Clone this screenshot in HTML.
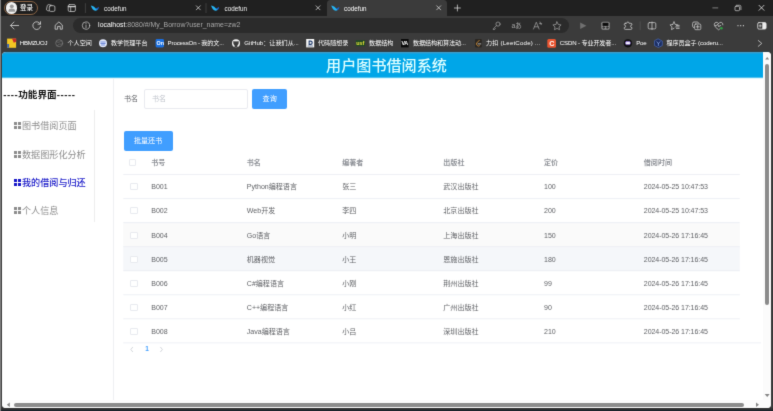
<!DOCTYPE html>
<html lang="zh-CN">
<head>
<meta charset="utf-8">
<title>codefun</title>
<style>
html,body{margin:0;padding:0;}
body{width:773px;height:411px;overflow:hidden;position:relative;background:#3b3b3b;
  font-family:"Liberation Sans","Noto Sans CJK SC",sans-serif;color:#fff;}
.abs{position:absolute;}
.t{position:absolute;white-space:nowrap;line-height:1;}
svg{position:absolute;overflow:visible;}

/* ---------- browser chrome ---------- */
#tabstrip{left:0;top:0;width:773px;height:16px;background:#202020;}
#activetab{left:326.5px;top:0.4px;width:120px;height:16px;background:#3b3b3b;border-radius:3.5px 3.5px 0 0;}
#toolbar{left:0;top:15.7px;width:773px;height:21px;background:#3b3b3b;}
#bookbar{left:0;top:36px;width:773px;height:16px;background:#3b3b3b;}
#addr{left:73px;top:18.1px;width:495.5px;height:14.8px;background:#2b2b2b;border-radius:8px;}
#leftedge{left:0;top:0;width:0.8px;height:411px;background:#808080;}
#bottomedge{left:1px;top:408px;width:772px;height:3px;background:linear-gradient(#333 0,#2e2e30 1.6px,#1c262c 1.6px);}
.tabtxt{font-size:6.3px;color:#f4f4f4;top:5.5px;}
.bm{font-size:6.1px;color:#fff;top:40.2px;}
#pill{left:3.5px;top:0.8px;width:34.5px;height:14.5px;border:0.8px solid #8a6445;border-radius:8px;box-sizing:border-box;background:#1f1f1f;}

/* ---------- page ---------- */
#page{left:2px;top:52px;width:769px;height:356px;background:#fff;border-radius:4px 4px 4px 4px;overflow:hidden;}
#hdr{left:0;top:0;width:761px;height:26px;background:linear-gradient(#3c9fcd 0,#3c9fcd 1px,#19a0dc 1px,#19a0dc 2px,#00a6e8 2px,#00a6e8 25px,#4fc0ee 25px);}
#in{left:0;top:0;width:769px;height:356px;}
#preedge{left:4px;top:51px;width:765px;height:1px;background:#2d4049;}
#title{font-size:15.1px;font-weight:500;color:#e0ffff;top:6.3px;left:0;width:769px;text-align:center;}
.side{font-size:9.1px;color:#8c8c8c;left:12px;}
.sq{display:inline-block;width:7px;height:7px;margin-right:1px;vertical-align:-0.3px;
  background:
   linear-gradient(currentColor,currentColor) 0 0/3px 3px no-repeat,
   linear-gradient(currentColor,currentColor) 4px 0/3px 3px no-repeat,
   linear-gradient(currentColor,currentColor) 0 4px/3px 3px no-repeat,
   linear-gradient(currentColor,currentColor) 4px 4px/3px 3px no-repeat;}
.btn{background:#409eff;border-radius:2px;color:#fff;font-size:7.05px;text-align:center;}
.th{font-size:7.05px;font-weight:bold;color:#909399;top:107px;}
.td{font-size:7.05px;color:#606266;}
.cb{left:128.300px;width:7.400px;height:7.400px;border:0.6px solid #e8eaef;border-radius:1px;box-sizing:border-box;background:#fff;}
.td.c6{letter-spacing:-0.07px}
.c1{left:149.2px}.c2{left:244.8px}.c3{left:340.2px}.c4{left:441.3px}.c5{left:542px}.c6{left:641.8px}
</style>
</head>
<body>
<svg width="0" height="0" style="position:absolute;left:0;top:0"><filter id="soft" x="0" y="0" width="1" height="1" color-interpolation-filters="sRGB"><feConvolveMatrix order="3" kernelMatrix="0.0121 0.0858 0.0121 0.0858 0.6084 0.0858 0.0121 0.0858 0.0121" divisor="1" edgeMode="duplicate" preserveAlpha="true"/></filter></svg>
<div class="abs" id="root" style="left:0;top:0;width:773px;height:411px;will-change:transform;background:#3b3b3b;filter:url(#soft);">
<!-- ======= tab strip ======= -->
<div class="abs" id="tabstrip"></div>
<div class="abs" id="activetab"></div>
<div class="abs" id="toolbar"></div>
<div class="abs" id="bookbar"></div>
<div class="abs" id="addr"></div>
<div class="abs" id="leftedge"></div>
<div class="abs" id="bottomedge"></div>
<div class="abs" id="preedge"></div>

<div class="abs" id="pill"></div>
<div class="abs" style="left:5.8px;top:2.2px;width:11.6px;height:11.6px;border-radius:50%;background:#f2f2f2;"></div>
<svg style="left:5.8px;top:2.2px" width="11.6" height="11.6" viewBox="0 0 24 24"><circle cx="12" cy="9" r="4" fill="#9a9a9a"/><path d="M5 19c0-4 3-5.5 7-5.5s7 1.500 7 5.500v1h-14z" fill="#9a9a9a"/></svg>
<div class="t" style="left:20px;top:4.6px;font-size:6.5px;font-weight:500;color:#fff;">登录</div>

<div class="t tabtxt" style="left:104px;">codefun</div>
<div class="t tabtxt" style="left:224.500px;">codefun</div>
<div class="t tabtxt" style="left:344px;color:#fff;">codefun</div>

<!-- ======= address ======= -->
<div class="t" style="left:98.100px;top:22.400px;font-size:6.930px;color:#fff;">localhost<span style="color:#a8a8a8">:8080/#/My_Borrow?user_name=zw2</span></div>

<!-- ======= bookmarks ======= -->
<div class="t bm" style="left:19.8px;letter-spacing:-0.3px">HBMZUOJ</div>
<div class="t bm" style="left:67.5px;">个人空间</div>
<div class="t bm" style="left:111px;">教学管理平台</div>
<div class="t bm" style="left:167.6px;letter-spacing:-0.15px">ProcessOn - 我的文...</div>
<div class="t bm" style="left:244.3px;">GitHub：让我们从...</div>
<div class="t bm" style="left:318px;">代码随想录</div>
<div class="t bm" style="left:369px;">数据结构</div>
<div class="t bm" style="left:413px;letter-spacing:-0.1px">数据结构和算法动...</div>
<div class="t bm" style="left:486px;letter-spacing:0.2px">力扣 (LeetCode) ...</div>
<div class="t bm" style="left:559.7px;letter-spacing:-0.13px">CSDN - 专业开发者...</div>
<div class="t bm" style="left:636.3px;letter-spacing:-0.3px">Poe</div>
<div class="t bm" style="left:666.5px;letter-spacing:-0.1px">程序员盒子 (coderu...</div>

<!-- ======= chrome icons ======= -->
<svg id="ico" style="left:0;top:0" width="773" height="52" viewBox="0 0 773 52" fill="none" stroke-linecap="round" stroke-linejoin="round">
  <!-- workspaces -->
  <g stroke="#cfcfcf" stroke-width="0.75">
    <path d="M48.800 10.900 L47.300 10.500 Q46.300 10.200 46.500 9.200 L47.300 5.600 Q47.600 4.500 48.700 4.700 L52 5.400"/>
    <rect x="49.300" y="5.700" width="5.600" height="5.700" rx="1.300" fill="#202020"/>
    <!-- tab actions -->
    <rect x="68.200" y="4.600" width="7.200" height="6.900" rx="1.400"/>
    <path d="M68.400 6.600 H75.200" stroke-width="1.300"/>
    <path d="M70.700 6.800 V11.300"/>
  </g>
  <path d="M85.400 3.600 V12.600 M206 3.600 V12.600" stroke="#555" stroke-width="0.6"/>
  <!-- favicons (bird) -->
    <g stroke="none">
    <path d="M90.800 5.400 C93.300 5.800 95.200 7.300 96.200 9 C97 9 97.600 8.600 98 8.200 C98 9.800 96.800 10.800 95.400 10.700 C93.300 10.400 91.800 8.400 90.800 5.400Z" fill="#25b3f2"/>
    <path d="M95.600 8.100 C96.800 8.200 98 7.600 98.900 6.800 C99 8.600 98 9.900 96.600 10.300 C96.900 9.400 96.400 8.600 95.600 8.100Z" fill="#1b62c4"/>
  </g>
  <g stroke="none" transform="translate(120.2 0)">
    <path d="M90.800 5.400 C93.300 5.800 95.200 7.300 96.200 9 C97 9 97.600 8.600 98 8.200 C98 9.800 96.800 10.800 95.400 10.700 C93.300 10.400 91.800 8.400 90.800 5.400Z" fill="#25b3f2"/>
    <path d="M95.600 8.100 C96.800 8.200 98 7.600 98.900 6.800 C99 8.600 98 9.900 96.600 10.300 C96.900 9.400 96.400 8.600 95.600 8.100Z" fill="#1b62c4"/>
  </g>
  <g stroke="none" transform="translate(240.4 0)">
    <path d="M90.800 5.400 C93.300 5.800 95.200 7.300 96.200 9 C97 9 97.600 8.600 98 8.200 C98 9.800 96.800 10.800 95.400 10.700 C93.300 10.400 91.800 8.400 90.800 5.400Z" fill="#25b3f2"/>
    <path d="M95.600 8.100 C96.800 8.200 98 7.600 98.900 6.800 C99 8.600 98 9.900 96.600 10.300 C96.900 9.400 96.400 8.600 95.600 8.100Z" fill="#1b62c4"/>
  </g>
  <!-- tab close buttons / plus -->
  <g stroke="#e8e8e8" stroke-width="0.7">
    <path d="M196.300 5.800 l4 4 m0 -4 l-4 4"/>
    <path d="M316 5.800 l4 4 m0 -4 l-4 4"/>
    <path d="M436.700 5.800 l4 4 m0 -4 l-4 4"/>
    <path d="M454.400 8 h6 m-3 -3 v6"/>
  </g>
  <!-- window controls -->
  <path d="M712.800 7.900 h5" stroke="#a9a9a9" stroke-width="0.7"/>
  <g stroke="#d5d5d5" stroke-width="0.7">
    <rect x="735" y="6.300" width="4.500" height="4.400" rx="0.900"/>
    <path d="M736.400 5.300 h3.200 q1.300 0 1.300 1.300 v3.100"/>
  </g>
  <path d="M759 5.300 l5 5 m0 -5 l-5 5" stroke="#f2f2f2" stroke-width="0.75"/>

  <!-- nav -->
  <g stroke="#d8d8d8" stroke-width="0.8">
    <path d="M18.600 25.500 H10.600 M14 22 L10.500 25.500 L14 29"/>
    <path d="M40.300 24 A3.900 3.900 0 1 0 40.600 26.300 M40.500 21.700 V24.200 H38"/>
    <path d="M55.500 25 L58.900 21.900 L62.300 25 V29.200 H60.200 V26.400 H57.600 V29.200 H55.500Z"/>
  </g>
  <!-- info -->
  <g stroke="#d0d0d0" stroke-width="0.7">
    <circle cx="86" cy="25.600" r="3.700"/>
    <path d="M86 25 V27.700 M86 23.500 V23.600"/>
  </g>
  <!-- address bar icons -->
  <g stroke="#a6a6a6" stroke-width="0.7">
    <circle cx="498" cy="24.100" r="2.100"/><path d="M496.500 25.600 L493.200 28.900 V29.500 H494.600 L495.300 28.400"/>
    <path d="M533.500 29 L536.300 22.200 L539.100 29 M534.500 26.800 H538.100 M540 22 l1.200 2.600 m-1.700 -1 h2.200"/>
    <path d="M557 21.900 L558.300 24.500 L561.100 24.900 L559 26.900 L559.500 29.700 L557 28.400 L554.500 29.700 L555 26.900 L552.900 24.900 L555.700 24.500Z"/>
  </g>
  <!-- play -->
  <path d="M580.200 22.500 L586.400 25.800 L580.200 29.100Z" fill="#707070" stroke="none"/>
  <!-- tampermonkey-like -->
  <rect x="601.300" y="21.700" width="8.400" height="8" rx="1.600" fill="#8e8e8e" stroke="none"/>
  <path d="M602.500 22.700 h6 v3.200 h-6z" fill="#0c0c0c" stroke="none"/>
  <circle cx="603.700" cy="27.600" r="1" fill="#3b3b3b" stroke="#1a1a1a" stroke-width="0.300"/><circle cx="607.300" cy="27.600" r="1" fill="#3b3b3b" stroke="#1a1a1a" stroke-width="0.300"/>
  <!-- puzzle -->
  <path d="M625.300 23.300 h1.300 a1.250 1.250 0 0 1 2.500 0 h1.800 q1 0 1 1 v0.700 a1.300 1.300 0 0 0 0 2.600 v0.800 q0 1 -1 1 h-5.600 q-1 0 -1 -1 v-0.800 a1.300 1.300 0 0 0 0 -2.600 v-0.700 q0 -1 1 -1z" stroke="#d0d0d0" stroke-width="0.75"/>
  <path d="M640.200 21.800 V29.700" stroke="#5c5c5c" stroke-width="0.6"/>
  <!-- split screen -->
  <g stroke="#d0d0d0" stroke-width="0.75">
    <rect x="648.200" y="22.600" width="7.600" height="6.300" rx="1.200"/><path d="M652 22 V29.500"/>
    <!-- favourites -->
    <path d="M674 21.900 L675.200 24.500 L677.800 24.900 M672.700 24.500 L674 21.900 M672.700 24.500 L670 24.900 L672 26.900 L671.500 29.600 L674 28.300 M676.400 25.400 H679.200 M675.600 26.900 H679.200 M676.400 28.400 H679.200"/>
    <!-- collections -->
    <rect x="694.600" y="24" width="6.200" height="5.700" rx="1.200"/><path d="M693.800 27.600 q-1.200 -0.200 -1.200 -1.400 v-2.800 q0 -1.400 1.400 -1.400 h3.200 q1.200 0 1.400 1 M697.700 25.300 v3 m-1.500 -1.500 h3"/>
    <!-- heart -->
    <path d="M718.600 23.600 q-1 -1.600 -2.600 -1.300 q-1.800 0.500 -1.700 2.500 q0.200 2.200 4.300 5 q1 -0.700 1.700 -1.300 M718.600 23.600 q1 -1.600 2.600 -1.300 q1.800 0.500 1.700 2.500 M715.200 25.600 h1.500 l0.900 -1.500 l1.300 2.800 l0.800 -1.300 h1"/>
  </g>
  <circle cx="721.400" cy="28.300" r="1.300" fill="#2fa043" stroke="none"/>
  <g fill="#dcdcdc" stroke="none"><circle cx="738" cy="25.700" r="0.600"/><circle cx="740.700" cy="25.700" r="0.600"/><circle cx="743.400" cy="25.700" r="0.600"/></g>
  <!-- sidebar btn -->
  <rect x="757.700" y="22.600" width="8.400" height="6.500" rx="1.300" stroke="#ececec" stroke-width="0.75"/>
  <path d="M762.300 22.600 h2.500 q1.300 0 1.300 1.300 v3.900 q0 1.300 -1.300 1.300 h-2.500z" fill="#ececec" stroke="none"/>
  <path d="M759 25.850 h2.400 m-1.200 -1.200 v2.400" stroke="#ececec" stroke-width="0.6"/>
  <!-- bookmark overflow chevron -->
  <path d="M758.300 40.500 L761.800 43.400 L758.300 46.300" stroke="#d8d8d8" stroke-width="0.75"/>

  <!-- bookmark favicons -->
  <g stroke="none">
    <rect x="7.100" y="38.600" width="9" height="9.200" fill="#f3c623"/>
    <path d="M12 38.600 h4.100 v3.200 l-2.300 0.900z" fill="#c62a2a"/>
    <path d="M7.100 44 h2 v3.800 h-2z" fill="#3b63b8"/>
    <circle cx="59.200" cy="43.200" r="3.500" fill="none" stroke="#7b7b7b" stroke-width="0.700"/>
    <path d="M56.300 41.600 q2 1.500 3.300 0.300 q1 -1.500 2.400 -1 M57 45.800 q1.500 -2.500 5.500 -1.800" fill="none" stroke="#7b7b7b" stroke-width="0.600"/>
    <circle cx="103" cy="43.200" r="4" fill="#e4eafc"/>
    <path d="M100.800 42 h4.400 M100.800 43.500 h4.400 M101.500 45 h3" stroke="#3f62c9" stroke-width="0.700" fill="none"/>
    <rect x="155.600" y="39" width="8.400" height="8.400" rx="1.400" fill="#1a6fe0"/>
    <circle cx="236" cy="43.200" r="4" fill="#f4f4f4"/>
    <path d="M234.600 47 v-1.600 q-1.700 -1.200 -1.300 -2.900 q-0.200 -1 0.300 -1.600 q0.800 0 1.300 0.500 q1.100 -0.300 2.200 0 q0.500 -0.500 1.300 -0.500 q0.500 0.600 0.300 1.600 q0.400 1.700 -1.300 2.900 v1.600z" fill="#3b3b3b"/>
    <rect x="306.200" y="39" width="8" height="8.400" fill="#f8f8f8"/>
    <path d="M308.600 40.500 h2 q2.200 0 2.200 2.200 q0 2.200 -2.200 2.200 h-2z M309.700 41.700 v2 h1 q0.900 0 0.900 -1 q0 -1 -0.900 -1z" fill="#1f3a6b" fill-rule="evenodd"/>
    <path d="M308 46 h4.600" stroke="#1f3a6b" stroke-width="0.600"/>
    <rect x="355.900" y="40.300" width="9.100" height="5.900" fill="#1f4a23"/>
    <rect x="401" y="39" width="7.600" height="8.400" fill="#0a0a0a"/>
    <rect x="475" y="39" width="6.800" height="8.400" rx="1" fill="#2a2622"/>
    <path d="M479.300 40.300 L476.700 43 q-0.700 0.900 0 1.800 l1 1 q0.900 0.700 1.800 0" fill="none" stroke="#f0a23a" stroke-width="0.700"/>
    <path d="M478 43.900 h2.800" stroke="#e8e8e8" stroke-width="0.700"/>
    <rect x="547.300" y="39.100" width="8.700" height="8.700" rx="1.500" fill="#ea5430"/>
    <circle cx="627.900" cy="43.300" r="4.100" fill="#0e0e10"/>
    <rect x="625.500" y="41.600" width="4.800" height="3" rx="1" fill="#f4f0ff" stroke="#8a63e8" stroke-width="0.500"/>
    <path d="M658.400 39 L662.300 41.100 V45.500 L658.400 47.600 L654.500 45.500 V41.100Z" fill="#1c2e63" stroke="#4f7be0" stroke-width="0.500"/>
    <path d="M656.900 41.800 L658.400 43.700 L659.900 41.800 M658.400 43.700 V45.600" fill="none" stroke="#9fc0ff" stroke-width="0.600"/>
  </g>
  <g font-family='"Liberation Sans",sans-serif' font-weight="bold" stroke="none">
    <text x="156.500" y="45.400" font-size="5.400" fill="#fff">On</text>
    <text x="356.300" y="45.100" font-size="5.400" fill="#e9e03a">usf</text>
    <text x="401.400" y="45.300" font-size="5.400" fill="#fff" letter-spacing="-0.4">VA</text>
    <text x="549.200" y="46" font-size="7.200" fill="#fff">C</text>
    <text x="511.600" y="28.200" font-size="6.800" fill="#a6a6a6" font-weight="normal" font-family='"Liberation Sans","Noto Sans CJK JP",sans-serif' letter-spacing="-0.3">aあ</text>
  </g>
</svg>

<!-- ======= page ======= -->
<div class="abs" id="page"><div class="abs" id="in">
  <div class="abs" id="hdr"></div>
  <div class="t" id="title">用户图书借阅系统</div>
  <div class="abs" style="left:0;top:26px;width:761px;height:1px;background:#def9fd;"></div>

  <!-- sidebar -->
  <div class="t" style="left:1.300px;top:37.600px;font-size:9.600px;font-weight:bold;color:#111;"><span style="letter-spacing:0.55px">----</span>功能界面<span style="letter-spacing:0.55px">-----</span></div>
  <div class="abs" style="left:92px;top:58px;width:0.6px;height:112px;background:#ededed;"></div>
  <div class="t side" style="top:70.200px;"><span class="sq"></span>图书借阅页面</div>
  <div class="t side" style="top:98.500px;"><span class="sq"></span>数据图形化分析</div>
  <div class="t side" style="top:126.800px;color:#1616c8;font-weight:500;"><span class="sq"></span>我的借阅与归还</div>
  <div class="t side" style="top:155.100px;"><span class="sq"></span>个人信息</div>
  <div class="abs" style="left:111px;top:26px;width:0.6px;height:322px;background:#eeeff2;"></div>

  <!-- search -->
  <div class="t" style="left:122px;top:42.700px;font-size:7.05px;color:#606266;">书名</div>
  <div class="abs" style="left:141.500px;top:36.500px;width:104px;height:20px;border:0.6px solid #e9ebf0;border-radius:2px;box-sizing:border-box;background:#fff;"></div>
  <div class="t" style="left:150px;top:42.700px;font-size:7.05px;color:#c0c4cc;">书名</div>
  <div class="abs btn" style="left:250px;top:36.700px;width:35.300px;height:19.900px;line-height:19.900px;">查询</div>
  <div class="abs btn" style="left:121.500px;top:78.700px;width:49.200px;height:19.900px;line-height:19.900px;">批量还书</div>

  <!-- table -->
  <svg style="left:0;top:0" width="769" height="356" viewBox="0 0 769 356" shape-rendering="geometricPrecision">
    <rect x="121.300" y="170.60" width="616.500" height="24.05" fill="#fafafa"/>
    <rect x="121.300" y="194.65" width="616.500" height="24.05" fill="#f5f7fa"/>
    <path d="M121.300 122.50 H737.800 M121.300 146.55 H737.800 M121.300 170.60 H737.800 M121.300 194.65 H737.800 M121.300 218.70 H737.800 M121.300 242.75 H737.800 M121.300 266.80 H737.800 M121.300 290.85 H759" stroke="#e6e9f1" stroke-width="0.700" fill="none"/>
  </svg>

  <div class="abs cb" style="top:107px;left:127px;"></div>
  <div class="t th c1">书号</div><div class="t th c2">书名</div><div class="t th c3">编著者</div><div class="t th c4">出版社</div><div class="t th c5">定价</div><div class="t th c6">借阅时间</div>

  <div class="abs cb" style="top:131.10px;"></div>
  <div class="t td c1" style="top:131px">B001</div><div class="t td c2" style="top:131px">Python编程语言</div><div class="t td c3" style="top:131px">张三</div><div class="t td c4" style="top:131px">武汉出版社</div><div class="t td c5" style="top:131px">100</div><div class="t td c6" style="top:131px">2024-05-25 10:47:53</div>

  <div class="abs cb" style="top:155.10px;"></div>
  <div class="t td c1" style="top:155px">B002</div><div class="t td c2" style="top:155px">Web开发</div><div class="t td c3" style="top:155px">李四</div><div class="t td c4" style="top:155px">北京出版社</div><div class="t td c5" style="top:155px">200</div><div class="t td c6" style="top:155px">2024-05-25 10:47:53</div>

  <div class="abs cb" style="top:180.10px;"></div>
  <div class="t td c1" style="top:180px">B004</div><div class="t td c2" style="top:180px">Go语言</div><div class="t td c3" style="top:180px">小明</div><div class="t td c4" style="top:180px">上海出版社</div><div class="t td c5" style="top:180px">150</div><div class="t td c6" style="top:180px">2024-05-26 17:16:45</div>

  <div class="abs cb" style="top:204.10px;"></div>
  <div class="t td c1" style="top:204px">B005</div><div class="t td c2" style="top:204px">机器视觉</div><div class="t td c3" style="top:204px">小王</div><div class="t td c4" style="top:204px">恩施出版社</div><div class="t td c5" style="top:204px">180</div><div class="t td c6" style="top:204px">2024-05-26 17:16:45</div>

  <div class="abs cb" style="top:228.10px;"></div>
  <div class="t td c1" style="top:228px">B006</div><div class="t td c2" style="top:228px">C#编程语言</div><div class="t td c3" style="top:228px">小刚</div><div class="t td c4" style="top:228px">荆州出版社</div><div class="t td c5" style="top:228px">99</div><div class="t td c6" style="top:228px">2024-05-26 17:16:45</div>

  <div class="abs cb" style="top:252.10px;"></div>
  <div class="t td c1" style="top:252px">B007</div><div class="t td c2" style="top:252px">C++编程语言</div><div class="t td c3" style="top:252px">小红</div><div class="t td c4" style="top:252px">广州出版社</div><div class="t td c5" style="top:252px">90</div><div class="t td c6" style="top:252px">2024-05-26 17:16:45</div>

  <div class="abs cb" style="top:276.10px;"></div>
  <div class="t td c1" style="top:276px">B008</div><div class="t td c2" style="top:276px">Java编程语言</div><div class="t td c3" style="top:276px">小吕</div><div class="t td c4" style="top:276px">深圳出版社</div><div class="t td c5" style="top:276px">210</div><div class="t td c6" style="top:276px">2024-05-26 17:16:45</div>

  <!-- pagination -->
  <svg style="left:0;top:0" width="200" height="310" viewBox="0 0 200 310" fill="none" stroke="#c0c4cc" stroke-width="0.7" stroke-linecap="round" stroke-linejoin="round"><path d="M130.600 295.300 L128.800 297.500 L130.600 299.700 M158.600 295.300 L160.400 297.500 L158.600 299.700"/></svg>
  <div class="t" style="left:143.200px;top:294.300px;font-size:6.500px;font-weight:bold;color:#409eff;">1</div>

  <!-- scrollbars -->
  <div class="abs" style="left:761px;top:0;width:8px;height:348px;background:#fbfbfb;"></div>
  <div class="abs" style="left:763.400px;top:12.400px;width:3.600px;height:240.600px;background:#8b8b8b;border-radius:2px;"></div>
  <div class="abs" style="left:0;top:348px;width:769px;height:8px;background:#fbfbfb;"></div>
  <div class="abs" style="left:12px;top:350.500px;width:730px;height:4px;background:#8b8b8b;border-radius:2px;"></div>
  <svg style="left:0;top:0" width="769" height="356" viewBox="0 0 769 356" fill="#858585"><path d="M763.200 7.600 L765.200 4.900 L767.200 7.600Z M762.700 342 L767.700 342 L765.200 345Z M754 350.600 L757 352.800 L754 355Z M7.800 350.600 L4.800 352.800 L7.800 355Z"/></svg>
</div></div>
</div>
</body>
</html>
